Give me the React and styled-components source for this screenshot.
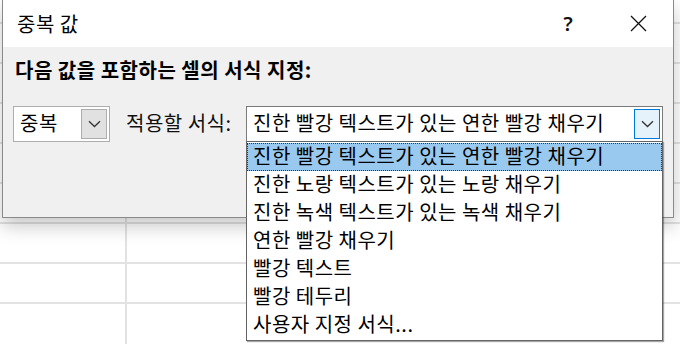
import { createGlobalStyle } from "styled-components";
import styled from "styled-components";

const GlobalStyle = createGlobalStyle`
  body {
    margin: 0;
    font-family: "Noto Sans CJK KR", "Noto Sans", sans-serif;
    color: #000;
  }
`;

// Hoja de cálculo de fondo
const Sheet = styled.div`
  position: relative;
  width: 680px;
  height: 344px;
  overflow: hidden;
  background-color: #fff;
  background-image:
    linear-gradient(to right, transparent 125px, #e2e2e2 125px, #e2e2e2 127px, transparent 127px),
    repeating-linear-gradient(to bottom, transparent 0, transparent 38px, #e2e2e2 38px, #e2e2e2 40px);
  background-position: 0 0, 0 -16px;
`;

// Ventana del diálogo
const Dialog = styled.div`
  margin-left: 2px;
  width: 670px;
  border: 1px solid #8a8a8a;
  border-top: none;
  box-shadow: 0 8px 18px rgba(0, 0, 0, 0.22);
  background: #f0f0f0;
`;

const TitleBar = styled.div`
  height: 47px;
  background: #fff;
  display: flex;
  align-items: center;
`;

const Title = styled.div`
  flex: 1;
  padding-left: 14px;
  font-size: 20px;
  letter-spacing: 0.5px;
  line-height: 1;
`;

const TitleButton = styled.div`
  width: 70px;
  height: 47px;
  display: flex;
  align-items: center;
  justify-content: center;
  font-family: "Noto Sans", sans-serif;
  font-size: 20px;
  font-weight: 600;
  color: #111;
`;

const Body = styled.div`
  height: 170px;
  padding: 0 10px;
  box-sizing: border-box;
`;

const Heading = styled.div`
  padding: 11px 0 0 2px;
  height: 47px;
  box-sizing: border-box;
  font-size: 20px;
  letter-spacing: 0.5px;
  font-weight: 700;
  line-height: 24px;
`;

const Row = styled.div`
  display: flex;
  align-items: center;
  margin-top: 12px;
`;

const Select = styled.div`
  position: relative;
  box-sizing: border-box;
  height: 36px;
  width: ${(p) => (p.$width ? `${p.$width}px` : "auto")};
  flex: ${(p) => (p.$width ? "none" : 1)};
  border: 1px solid ${(p) => (p.$focused ? "#7a7a7a" : "#adadad")};
  background: #fff;
  display: flex;
  align-items: center;
  padding: 0 2px 0 6px;
`;

const SelectText = styled.div`
  flex: 1;
  font-size: 20px;
  letter-spacing: 0.5px;
  line-height: 1;
  margin-top: -3px;
  white-space: nowrap;
`;

const ArrowButton = styled.div`
  width: 26px;
  height: 30px;
  box-sizing: border-box;
  display: flex;
  align-items: center;
  justify-content: center;
  border: 1px solid ${(p) => (p.$active ? "#0078d7" : "#adadad")};
  background: ${(p) => (p.$active ? "#e5f1fb" : "#e1e1e1")};
`;

const Label = styled.div`
  width: 120px;
  margin-left: 16px;
  font-size: 20px;
  letter-spacing: 0.5px;
  line-height: 1;
  margin-top: -3px;
  color: #111;
`;

// Lista desplegable
const List = styled.ul`
  position: absolute;
  top: 100%;
  left: -1px;
  right: -1px;
  margin: 0;
  padding: 1px 0 0;
  list-style: none;
  height: 200px;
  box-sizing: border-box;
  border: 1px solid #646464;
  box-shadow: 1px 1px 1px rgba(0, 0, 0, 0.35);
  background: #fff;
`;

const Item = styled.li`
  height: 28px;
  box-sizing: border-box;
  padding-left: 6px;
  display: flex;
  align-items: center;
  font-size: 20px;
  letter-spacing: 0.5px;
  line-height: 1;
  white-space: nowrap;
  background: ${(p) => (p.$selected ? "#99c9ef" : "transparent")};
  outline: ${(p) => (p.$selected ? "1px dotted #333" : "none")};
  outline-offset: -1px;

  span {
    margin-top: -2px;
  }
`;

const Chevron = () => (
  <svg width="13" height="8" viewBox="0 0 13 8">
    <path d="M1 1.2 L6.5 6.5 L12 1.2" fill="none" stroke="#333" strokeWidth="1.3" />
  </svg>
);

const CloseIcon = () => (
  <svg width="17" height="17" viewBox="0 0 17 17">
    <path d="M1 1 L16 16 M16 1 L1 16" stroke="#111" strokeWidth="1.3" />
  </svg>
);

const options = [
  "진한 빨강 텍스트가 있는 연한 빨강 채우기",
  "진한 노랑 텍스트가 있는 노랑 채우기",
  "진한 녹색 텍스트가 있는 녹색 채우기",
  "연한 빨강 채우기",
  "빨강 텍스트",
  "빨강 테두리",
  "사용자 지정 서식...",
];

function App() {
  return (
    <Sheet>
      <GlobalStyle />
      <Dialog>
        <TitleBar>
          <Title>중복 값</Title>
          <TitleButton>?</TitleButton>
          <TitleButton>
            <CloseIcon />
          </TitleButton>
        </TitleBar>
        <Body>
          <Heading>다음 값을 포함하는 셀의 서식 지정:</Heading>
          <Row>
            <Select $width={97}>
              <SelectText>중복</SelectText>
              <ArrowButton>
                <Chevron />
              </ArrowButton>
            </Select>
            <Label>적용할 서식:</Label>
            <Select $focused>
              <SelectText>{options[0]}</SelectText>
              <ArrowButton $active>
                <Chevron />
              </ArrowButton>
              <List>
                {options.map((o, i) => (
                  <Item key={o} $selected={i === 0}>
                    <span>{o}</span>
                  </Item>
                ))}
              </List>
            </Select>
          </Row>
        </Body>
      </Dialog>
    </Sheet>
  );
}

export default App;
